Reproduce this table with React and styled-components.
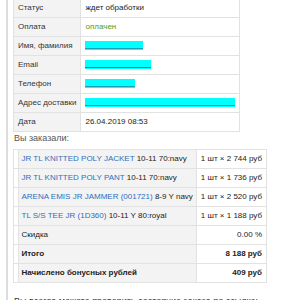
import React from 'react'
import styled, { createGlobalStyle } from 'styled-components'

const GlobalStyle = createGlobalStyle`
    html, body {
        margin: 0;
        padding: 0;
        background: #ffffff;
        overflow: hidden;
    }
    body {
        font-family: "Liberation Sans", Arial, sans-serif;
        color: #333333;
    }
`

const info = [
    { label: 'Статус', value: 'ждет обработки' },
    { label: 'Оплата', value: 'оплачен', paid: true },
    { label: 'Имя, фамилия', hidden: 58 },
    { label: 'Email', hidden: 66, link: true },
    { label: 'Телефон', hidden: 50 },
    { label: 'Адрес доставки', hidden: 150 },
    { label: 'Дата', value: '26.04.2019 08:53' },
]

const items = [
    { name: 'JR TL KNITTED POLY JACKET', size: '10-11 70:navy', price: '1 шт × 2 744 руб' },
    { name: 'JR TL KNITTED POLY PANT', size: '10-11 70:navy', price: '1 шт × 1 736 руб' },
    { name: 'ARENA EMIS JR JAMMER (001721)', size: '8-9 Y navy', price: '1 шт × 2 520 руб' },
    { name: 'TL S/S TEE JR (1D360)', size: '10-11 Y 80:royal', price: '1 шт × 1 188 руб' },
]

const totals = [
    { label: 'Скидка', value: '0.00 %' },
    { label: 'Итого', value: '8 188 руб', bold: true },
    { label: 'Начислено бонусных рублей', value: '409 руб', bold: true },
]

export default function App() {
    return (
        <>
            <GlobalStyle />
            <Wrapper>
                <InfoTable>
                    <tbody>
                        {info.map((row) => (
                            <tr key={row.label}>
                                <Label>{row.label}</Label>
                                <Value $paid={row.paid}>
                                    {row.hidden ? <Hidden $w={row.hidden} $link={row.link} /> : row.value}
                                </Value>
                            </tr>
                        ))}
                    </tbody>
                </InfoTable>

                <Heading>Вы заказали:</Heading>

                <OrderTable>
                    <tbody>
                        {items.map((item) => (
                            <tr key={item.name}>
                                <Thumb />
                                <Product>
                                    <ProductLink href="#">{item.name}</ProductLink> {item.size}
                                </Product>
                                <Price>{item.price}</Price>
                            </tr>
                        ))}
                        {totals.map((row) => (
                            <tr key={row.label}>
                                <Thumb />
                                <Product $bold={row.bold}>{row.label}</Product>
                                <Price $bold={row.bold}>{row.value}</Price>
                            </tr>
                        ))}
                    </tbody>
                </OrderTable>

                <Note>Вы всегда можете проверить состояние заказа по ссылке:</Note>
            </Wrapper>
        </>
    )
}

const Wrapper = styled.div`
    margin-left: 6px;
    min-height: 100vh;
    border-left: 2px solid #dcdcdc;
    padding-left: 5px;
    margin-top: -2px;
`

const InfoTable = styled.table`
    width: 221px;
    border-collapse: collapse;
    font-size: 8px;
    td {
        border: 1px solid #e2e2e2;
        height: 18px;
        line-height: 18px;
        padding: 0 4px;
        white-space: nowrap;
    }
`

const Label = styled.td`
    width: 57px;
    background: #f3f3f3;
    color: #333333;
`

const Value = styled.td`
    background: #ffffff;
    color: ${(p) => (p.$paid ? '#4f9a2c' : '#222222')};
`

const Hidden = styled.span`
    display: inline-block;
    vertical-align: middle;
    width: ${(p) => p.$w}px;
    height: 9px;
    background: #00ffff;
    background-image: linear-gradient(
        to top,
        transparent 1px,
        ${(p) => (p.$link ? '#2d6cf0' : 'rgba(40, 90, 120, 0.55)')} 1px,
        ${(p) => (p.$link ? '#2d6cf0' : 'rgba(40, 90, 120, 0.55)')} 2px,
        transparent 2px
    );
`

const Heading = styled.div`
    font-size: 9px;
    line-height: 12px;
    color: #555555;
    margin: 0 0 5px 1px;
`

const OrderTable = styled.table`
    width: 254px;
    border-collapse: collapse;
    font-size: 8px;
    td {
        border: 1px solid #e2e2e2;
        height: 18px;
        line-height: 18px;
        white-space: nowrap;
    }
`

const Thumb = styled.td`
    width: 8px;
    padding: 0;
    background: #ffffff;
`

const Product = styled.td`
    padding: 0 3px;
    background: #f3f3f3;
    color: #222222;
    font-weight: ${(p) => (p.$bold ? 700 : 400)};
`

const ProductLink = styled.a`
    color: #2f6ec0;
    text-decoration: none;
`

const Price = styled.td`
    width: 60px;
    padding: 0 4px;
    text-align: right;
    background: #ffffff;
    color: #222222;
    font-weight: ${(p) => (p.$bold ? 700 : 400)};
`

const Note = styled.p`
    font-size: 9px;
    line-height: 12px;
    color: #333333;
    margin: 12px 0 0 1px;
`
